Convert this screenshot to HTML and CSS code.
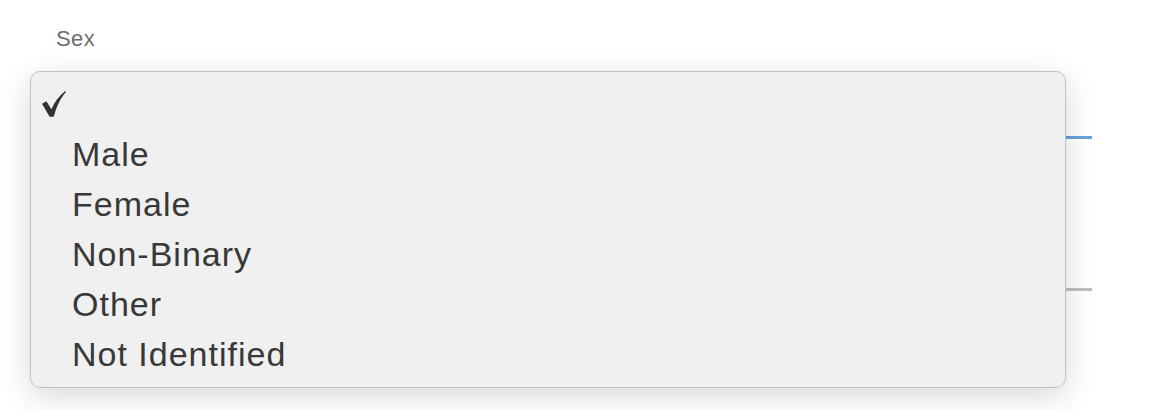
FILE: index.html
```html
<!DOCTYPE html>
<html lang="en">
<head>
    <meta charset="UTF-8">
    <meta name="viewport" content="width=device-width, initial-scale=1.0">
    <title>Sex Select</title>
    <link rel="stylesheet" href="styles.css">
</head>
<body>
    <form class="profile-form">
        <div class="form-group">
            <label class="field-label" for="sex">Sex</label>
            <div class="select-field focused" id="sex"></div>
        </div>
        <div class="form-group">
            <div class="text-field"></div>
        </div>

        <ul class="dropdown-menu">
            <li class="menu-item">
                <span class="check">
                    <svg width="24" height="26" viewBox="0 0 24 26">
                        <path d="M0 12.8 L4.4 10.2 L9.4 18.2 C12.6 10.8 17 5 23.2 0 L24 0.9 C18.5 7 14.8 14.5 11.8 25.8 L7.6 25.8 Z" fill="#333"/>
                    </svg>
                </span>
                <span class="item-text"></span>
            </li>
            <li class="menu-item"><span class="check"></span><span class="item-text">Male</span></li>
            <li class="menu-item"><span class="check"></span><span class="item-text">Female</span></li>
            <li class="menu-item"><span class="check"></span><span class="item-text">Non-Binary</span></li>
            <li class="menu-item"><span class="check"></span><span class="item-text">Other</span></li>
            <li class="menu-item"><span class="check"></span><span class="item-text">Not Identified</span></li>
        </ul>
    </form>
</body>
</html>
```

FILE: styles.css
```css
body {
    margin: 0;
    background-color: #ffffff;
    font-family: "Liberation Sans", Arial, sans-serif;
}
.profile-form {
    position: relative;
    box-sizing: border-box;
    width: 1154px;
    height: 410px;
    padding: 27px 62px 0 56px;
}
.form-group {
    display: flex;
    flex-direction: column;
}
.field-label {
    font-size: 22px;
    line-height: 24px;
    letter-spacing: 0.4px;
    color: #6e6e6e;
}
.select-field {
    height: 85px;
    border-bottom: 3px solid #bdbdbd;
}
.select-field.focused {
    border-bottom-color: #68a3db;
}
.text-field {
    height: 149px;
    border-bottom: 3px solid #bfbfbf;
}
.dropdown-menu {
    position: absolute;
    top: 71px;
    left: 30px;
    width: 1036px;
    box-sizing: border-box;
    margin: 0;
    padding: 7px 0 8px 11px;
    list-style: none;
    background-color: #f0f0f0;
    border: 1px solid #c2c2c2;
    border-radius: 10px;
    box-shadow: 0 8px 30px rgba(0, 0, 0, 0.16);
}
.menu-item {
    display: flex;
    align-items: center;
    height: 50px;
    font-size: 34px;
    letter-spacing: 1px;
    color: #383838;
}
.check {
    width: 30px;
    flex-shrink: 0;
    display: flex;
    align-items: center;
}
.check svg {
    display: block;
}
.item-text {
    white-space: nowrap;
}
```
